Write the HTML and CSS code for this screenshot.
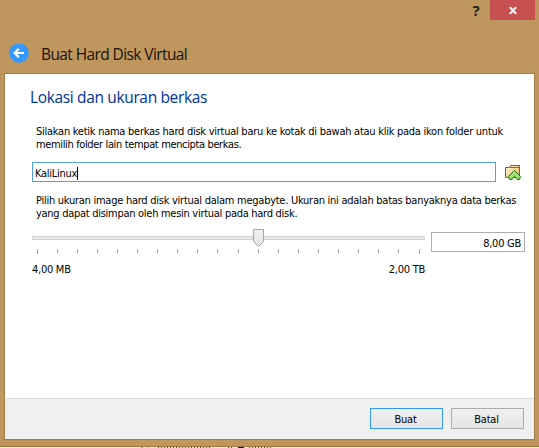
FILE: index.html
```html
<!DOCTYPE html>
<html lang="id">
<head>
<meta charset="utf-8">
<title>Buat Hard Disk Virtual</title>
<link rel="stylesheet" href="styles.css">
</head>
<body>
<div class="window">
  <header class="titlebar">
    <div class="controls">
      <span class="help">?</span>
      <span class="close"><svg width="8" height="7" viewBox="0 0 8 7"><path d="M.8 0 7.2 7M7.2 0 .8 7" stroke="#fff" stroke-width="1.9"/></svg></span>
    </div>
    <div class="caption">
      <svg class="back" width="20" height="20" viewBox="0 0 20 20"><circle cx="10" cy="10" r="9.8" fill="#3399ff"/><path d="M15 10H6M9.8 5.8 5.6 10l4.2 4.2" fill="none" stroke="#fff" stroke-width="2.2"/></svg>
      <span class="caption-text">Buat Hard Disk Virtual</span>
    </div>
  </header>
  <main class="page">
    <section class="content">
      <h1>Lokasi dan ukuran berkas</h1>
      <p class="para"><span class="l1">Silakan ketik nama berkas hard disk virtual baru ke kotak di bawah atau klik pada ikon folder untuk</span><br><span class="l2">memilih folder lain tempat mencipta berkas.</span></p>
      <div class="file-row">
        <div class="field"><span class="name">KaliLinux</span><i class="caret"></i></div>
        <svg class="folder" width="18" height="17" viewBox="0 0 18 17">
          <defs><linearGradient id="f" x1="0" y1="0" x2="1" y2="1"><stop offset="0" stop-color="#fffbe4"/><stop offset="1" stop-color="#f2b54c"/></linearGradient></defs>
          <path d="M1.500 3.500h4l1-2h9v12h-14z" fill="url(#f)" stroke="#a0521f"/>
          <path d="M6 3.500h9" stroke="#a85a2b"/>
          <path d="M10.500 6.500 16.500 12.500 15.500 15.500H13L10.500 12.500 8 15.500H5.500L4.500 12.500Z" fill="#8fdc5a" stroke="#287818"/>
          <path d="M6 13 10.500 8.800 15 13" fill="none" stroke="#c8f5a8"/>
        </svg>
      </div>
      <p class="para second"><span class="l3">Pilih ukuran image hard disk virtual dalam megabyte. Ukuran ini adalah batas banyaknya data berkas</span><br><span class="l4">yang dapat disimpan oleh mesin virtual pada hard disk.</span></p>
      <div class="size-row">
        <div class="slider">
          <svg class="track" width="393" height="26" viewBox="0 0 393 26">
            <defs><linearGradient id="h" x1="0" y1="0" x2="0" y2="1"><stop offset="0" stop-color="#f1f1f1"/><stop offset="1" stop-color="#e3e3e3"/></linearGradient></defs>
            <rect x=".5" y="7.500" width="392" height="3" fill="#e7eaea" stroke="#d3d6d5"/>
            <path d="M221.500 .5h10v12l-5 5-5-5z" fill="url(#h)" stroke="#a6a6a8"/>
            <path d="M5.500 20v5M25.500 20v4M45.500 20v4M65.500 20v4M85.500 20v4M105.500 20v4M125.500 20v4M145.500 20v4M165.500 20v4M185.500 20v4M206.500 20v4M226.500 20v4M246.500 20v4M266.500 20v4M286.500 20v4M306.500 20v4M326.500 20v4M346.500 20v4M366.500 20v4M387.500 20v5" stroke="#a5a59a"/>
          </svg>
          <div class="limits"><span class="min">4,00 MB</span><span class="max">2,00 TB</span></div>
        </div>
        <div class="size"><span>8,00 GB</span></div>
      </div>
    </section>
    <footer class="actions">
      <button class="btn primary"><span>Buat</span></button>
      <button class="btn"><span>Batal</span></button>
    </footer>
  </main>
</div>
<svg class="behind" width="539" height="1" viewBox="0 0 539 1"><path d="M141 .5h7" stroke="#aaa69e" stroke-dasharray="2 4"/><path d="M158 .5h54M228 .5h5M249 .5h24" stroke="#55504f" stroke-dasharray="1 2"/><path d="M238 .5h6" stroke="#111"/></svg>
</body>
</html>
```
FILE: styles.css
```css
* { box-sizing: border-box; }
body {
  margin: 0;
  width: 539px;
  height: 448px;
  overflow: hidden;
  background: #f5ebe1;
  font: 11px/13px "DejaVu Sans Condensed", "DejaVu Sans", sans-serif;
  font-stretch: condensed;
  letter-spacing: -0.26px;
  color: #000;
}
svg { display: block; flex: none; }
.window {
  height: 447px;
  background: #bf975e;
  border-bottom: 1px solid #9b7742;
  padding: 0 4px 6px;
  display: flex;
  flex-direction: column;
}
.titlebar { height: 73px; flex: none; }
.controls { display: flex; justify-content: flex-end; height: 20px; }
.help {
  width: 20px;
  margin-right: 4px;
  text-align: center;
  font: bold 15px/20px "Noto Sans", sans-serif;
  color: #252525;
}
.close {
  width: 45px;
  background: #c75050;
  display: flex;
  align-items: center;
  justify-content: center;
  padding-top: 1px;
}
.caption { display: flex; align-items: center; padding: 23px 0 0 5px; height: 43px; }
.caption-text {
  margin-left: 12px;
  font: 15.5px/20px "Open Sans", sans-serif;
  letter-spacing: -0.6px;
  padding-top: 2px;
  white-space: nowrap;
  color: #17120b;
}
.page {
  width: 531px;
  flex: 1;
  background: #fff;
  border: 1px solid #a57f49;
  display: flex;
  flex-direction: column;
}
.content { flex: 1; padding: 12px 9px 0 27px; }
h1 {
  margin: 0 0 0 -2px;
  font: 15.5px/22px "Open Sans", sans-serif;
  letter-spacing: -0.35px;
  color: #003399;
  white-space: nowrap;
}
.para { margin: 17px 0 0 4px; white-space: nowrap; }
.para.second { margin-top: 12px; }
.l2 { letter-spacing: -0.36px; }
.l4 { letter-spacing: -0.28px; }
.file-row { display: flex; margin-top: 11px; height: 20px; }
.field {
  width: 464px;
  border: 1px solid #569de5;
  display: flex;
  align-items: center;
  padding: 2px 0 0 2px;
}
.caret { width: 1px; height: 13px; background: #000; }
.folder { margin: 2px 0 0 8px; }
.size-row { display: flex; margin-top: 9px; }
.slider { width: 393px; }
.limits { display: flex; justify-content: space-between; margin-top: 8px; }
.size {
  width: 94px;
  height: 20px;
  margin: 3px 0 0 6px;
  border: 1px solid #abadb3;
  text-align: right;
  padding: 4px 3px 0 0;
}
.actions {
  height: 41px;
  border-top: 1px solid #dfdfdf;
  background: #f0f0f0;
  display: flex;
  justify-content: flex-end;
  gap: 8px;
  padding: 9px 10px 0 0;
}
.btn {
  width: 73px;
  height: 21px;
  padding: 2px 2px 0 0;
  border: 1px solid #acacac;
  background: linear-gradient(#f0f0f0, #e5e5e5);
  font: inherit;
  letter-spacing: -0.2px;
  color: #000;
}
.btn.primary { border-color: #3399ff; }
```
